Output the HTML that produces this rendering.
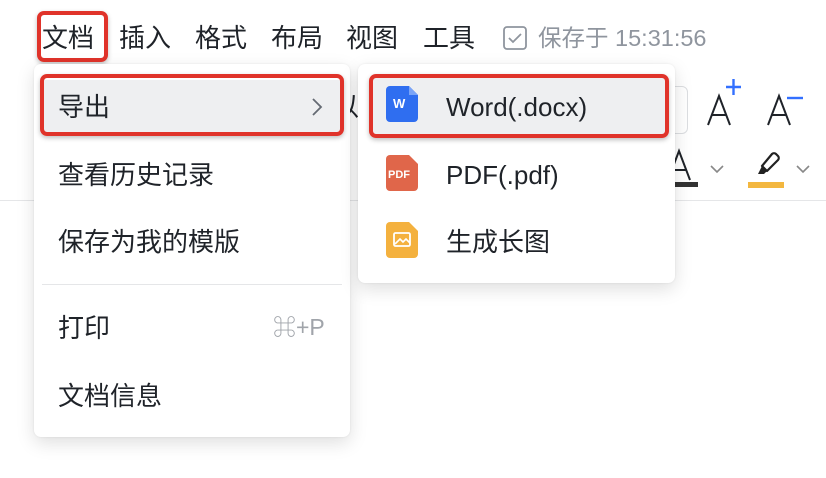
<!DOCTYPE html>
<html><head><meta charset="utf-8"><style>
*{margin:0;padding:0;box-sizing:border-box}
body{width:826px;height:478px;background:#fff;position:relative;overflow:hidden;font-family:"Liberation Sans","Noto Sans CJK SC",sans-serif;color:#1f2329}
.a{position:absolute;white-space:nowrap}
.mb{font-size:26px;top:20px;line-height:36px}
.menu{position:absolute;background:#fff;border-radius:7px;box-shadow:0 6px 18px rgba(0,0,0,.13),0 0 2px rgba(0,0,0,.08)}
.it{position:absolute;font-size:26px;line-height:36px}
.red{position:absolute;border:4px solid #e0332a;border-radius:7px;box-shadow:0 2px 5px rgba(0,0,0,.25)}
.hl{position:absolute;background:#eeeff1;border-radius:4px}
</style></head><body>
<!-- background toolbar -->
<div class="a" style="left:650px;top:86px;width:38px;height:48px;border:1px solid #dcdee1;border-radius:6px"></div>
<div class="a" style="left:333px;top:89px;font-size:26px;line-height:36px">以</div>
<svg class="a" style="left:704px;top:74px" width="40" height="54"><path d="M4 51L15 22 26 51M8 41h15" stroke="#1f2329" stroke-width="2" fill="none"/><path d="M22 13h15M29.5 5v16" stroke="#3370ff" stroke-width="2.4"/></svg>
<svg class="a" style="left:764px;top:74px" width="40" height="54"><path d="M4 51L15 22 26 51M8 41h15" stroke="#1f2329" stroke-width="2" fill="none"/><path d="M23 24h16" stroke="#3370ff" stroke-width="2.4"/></svg>
<svg class="a" style="left:664px;top:145px" width="30" height="36"><path d="M4 35L15 6 26 35M8 25h15" stroke="#1f2329" stroke-width="2" fill="none"/></svg>
<div class="a" style="left:674px;top:182px;width:24px;height:5px;background:#333"></div>
<svg class="a" style="left:708px;top:162px" width="18" height="12"><path d="M3 4l6 6 6-6" stroke="#888" stroke-width="1.6" fill="none"/></svg>
<svg class="a" style="left:750px;top:145px" width="32" height="36"><path d="M12 21l10-12a3 3 0 0 1 4 0l2 2a3 3 0 0 1 0 4L17 26z" stroke="#222" stroke-width="2.2" fill="none" stroke-linejoin="round"/><path d="M12 21l5 5-3 3h-6z" fill="#222"/></svg>
<div class="a" style="left:748px;top:182px;width:36px;height:6px;background:#f3b73f"></div>
<svg class="a" style="left:794px;top:162px" width="18" height="12"><path d="M3 4l6 6 6-6" stroke="#888" stroke-width="1.6" fill="none"/></svg>
<div class="a" style="left:0;top:200px;width:826px;height:1px;background:#e5e6e8"></div>

<!-- menubar -->
<div class="a mb" style="left:42px">文档</div>
<div class="a mb" style="left:119px">插入</div>
<div class="a mb" style="left:195px">格式</div>
<div class="a mb" style="left:271px">布局</div>
<div class="a mb" style="left:346px">视图</div>
<div class="a mb" style="left:423px">工具</div>
<svg class="a" style="left:502px;top:25px" width="26" height="26"><rect x="2" y="2" width="22" height="22" rx="3" stroke="#8f959e" stroke-width="1.8" fill="none"/><path d="M7 13l4 4 8-8" stroke="#8f959e" stroke-width="1.8" fill="none"/></svg>
<div class="a" style="left:538px;top:23px;font-size:23.5px;line-height:30px;color:#8f959e">保存于 15:31:56</div>
<div class="red" style="left:37px;top:11px;width:71px;height:51px"></div>

<!-- left menu -->
<div class="menu" style="left:34px;top:64px;width:316px;height:373px"></div>
<div class="hl" style="left:42px;top:80px;width:300px;height:54px"></div>
<div class="it" style="left:58px;top:89px">导出</div>
<svg class="a" style="left:310px;top:96px" width="14" height="22"><path d="M3 3l8 8-8 8" stroke="#646a73" stroke-width="1.8" fill="none"/></svg>
<div class="red" style="left:40px;top:74px;width:304px;height:62px"></div>
<div class="it" style="left:58px;top:157px">查看历史记录</div>
<div class="it" style="left:58px;top:224px">保存为我的模版</div>
<div class="a" style="left:42px;top:284px;width:300px;height:1px;background:#e5e6e8"></div>
<div class="it" style="left:58px;top:310px">打印</div>
<div class="a" style="left:273px;top:313px;font-size:23px;line-height:28px;color:#a0a4aa">⌘+P</div>
<div class="it" style="left:58px;top:378px">文档信息</div>

<!-- sub menu -->
<div class="menu" style="left:358px;top:64px;width:317px;height:219px"></div>
<div class="hl" style="left:372px;top:78px;width:294px;height:56px"></div>
<svg class="a" style="left:386px;top:86px" width="32" height="36"><path d="M4 0h19l9 9v23a4 4 0 0 1-4 4H4a4 4 0 0 1-4-4V4a4 4 0 0 1 4-4z" fill="#2f6ef0"/><path d="M23 0l9 9h-9z" fill="#7aa4f7"/><text x="7" y="22" font-size="13" font-weight="bold" fill="#fff" font-family="Liberation Sans">W</text></svg>
<div class="it" style="left:446px;top:89px">Word(.docx)</div>
<div class="red" style="left:369px;top:74px;width:300px;height:64px"></div>
<svg class="a" style="left:386px;top:155px" width="32" height="36"><path d="M4 0h19l9 9v23a4 4 0 0 1-4 4H4a4 4 0 0 1-4-4V4a4 4 0 0 1 4-4z" fill="#e0664a"/><text x="2" y="23" font-size="11" font-weight="bold" fill="#fff" font-family="Liberation Sans">PDF</text></svg>
<div class="it" style="left:446px;top:157px">PDF(.pdf)</div>
<svg class="a" style="left:386px;top:222px" width="32" height="36"><path d="M4 0h19l9 9v23a4 4 0 0 1-4 4H4a4 4 0 0 1-4-4V4a4 4 0 0 1 4-4z" fill="#f4b13e"/><rect x="8" y="11" width="16" height="13" rx="1.5" stroke="#fff" stroke-width="1.8" fill="none"/><path d="M9 22l5-5 3 3 3-3 4 4" stroke="#fff" stroke-width="1.6" fill="none"/></svg>
<div class="it" style="left:446px;top:224px">生成长图</div>
</body></html>
